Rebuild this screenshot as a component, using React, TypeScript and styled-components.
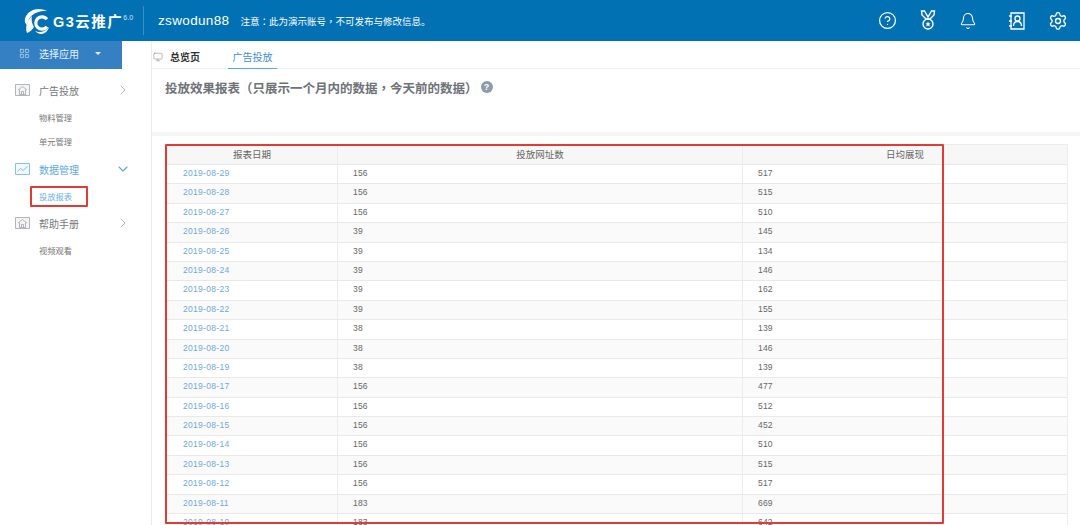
import styled, { createGlobalStyle } from 'styled-components'
import { Bell, ChevronDown, ChevronRight, CircleHelp, LayoutGrid, Monitor, Settings } from 'lucide-react'

const GlobalStyle = createGlobalStyle`
  html, body {
    margin: 0;
    height: 525px;
    overflow: hidden;
    background: #fff;
    font-family: "Liberation Sans", "Noto Sans CJK SC", sans-serif;
  }
  * { box-sizing: border-box; }
`

const Page = styled.div`
  position: relative;
  width: 1080px;
  height: 525px;
  overflow: hidden;
`

const TopBar = styled.header`
  display: flex;
  align-items: center;
  height: 41px;
  padding-left: 24px;
  background: #0271b4;
  color: #fff;
`

const Logo = styled.div`
  display: flex;
  align-items: center;
  width: 119px;
`

const LogoName = styled.span`
  margin-left: 2px;
  font-size: 14.5px;
  font-weight: 700;
  letter-spacing: 1.5px;
  white-space: nowrap;
`

const LogoVersion = styled.sup`
  margin: -7px 0 0 0;
  font-size: 7px;
  opacity: 0.8;
`

const Divider = styled.div`
  width: 1px;
  height: 29px;
  margin-right: 14px;
  background: rgba(255, 255, 255, 0.22);
`

const UserName = styled.span`
  font-size: 13.5px;
  letter-spacing: 0.35px;
`

const Notice = styled.span`
  margin-left: 11px;
  font-family: "Liberation Sans", "Noto Sans CJK TC", sans-serif;
  font-size: 9.5px;
`

const NoticeStop = styled.span`
  font-family: "Noto Sans CJK SC", sans-serif;
`

const TopIcons = styled.div`
  display: flex;
  align-items: center;
  margin-left: auto;
  padding-right: 2px;
`

const TopIcon = styled.span<{ $width: number }>`
  display: flex;
  justify-content: center;
  width: ${p => p.$width}px;
`

const Body = styled.div`
  display: flex;
  height: 484px;
`

const Sidebar = styled.aside`
  flex: none;
  width: 152px;
  border-right: 1px solid #ececec;
`

const AppSelect = styled.div`
  display: flex;
  align-items: center;
  width: 122px;
  height: 28px;
  padding: 0 0 3px 19px;
  background: #3580c2;
  color: #e8f2fa;
  font-size: 10px;
`

const AppLabel = styled.span`
  margin-left: 9px;
`

const Caret = styled.span`
  width: 0;
  height: 0;
  margin-left: 16px;
  border-left: 3.5px solid transparent;
  border-right: 3.5px solid transparent;
  border-top: 3.5px solid #e8f2fa;
`

const NavGroup = styled.div<{ $top: number }>`
  display: flex;
  align-items: center;
  height: 20px;
  margin-top: ${p => p.$top}px;
  padding: 0 20px 0 15px;
`

const NavIconBox = styled.span<{ $active?: boolean }>`
  display: flex;
  width: 15px;
  height: 12px;
  color: ${p => (p.$active ? '#7db8e8' : '#a9adb1')};
`

const NavLabel = styled.span<{ $active?: boolean }>`
  flex: 1;
  margin-left: 9px;
  font-size: 10px;
  color: ${p => (p.$active ? '#5ba7e6' : '#777')};
`

const NavChild = styled.div<{ $active?: boolean; $top: number }>`
  height: 14px;
  margin-top: ${p => p.$top}px;
  padding-left: 39px;
  font-size: 8.25px;
  line-height: 14px;
  color: ${p => (p.$active ? '#6bb0ea' : '#777')};
`

const Main = styled.main`
  flex: 1;
  min-width: 0;
`

const Tabs = styled.nav`
  display: flex;
  height: 28px;
  border-bottom: 1px solid #eee;
`

const Tab = styled.div<{ $active?: boolean }>`
  display: flex;
  align-items: center;
  gap: 7px;
  height: 28px;
  padding-top: 3px;
  font-size: 10px;
  color: ${p => (p.$active ? '#3c8fd4' : '#333')};
  font-weight: ${p => (p.$active ? 400 : 700)};
  border-bottom: ${p => (p.$active ? '1px solid #5ba7e6' : 'none')};
`

const OverviewTab = styled(Tab)`
  margin-left: 1px;
  width: 75px;
`

const AdTab = styled(Tab)`
  justify-content: center;
  width: 49px;
`

const TitleArea = styled.div`
  display: flex;
  align-items: flex-start;
  height: 67px;
  padding: 11px 0 0 13px;
  border-bottom: 4px solid #f6f6f6;
`

const Title = styled.h1`
  margin: 0;
  font-family: "Liberation Sans", "Noto Sans CJK TC", sans-serif;
  font-size: 12.5px;
  line-height: 18px;
  font-weight: 700;
  color: #6e7278;
  white-space: nowrap;
`

const HelpDot = styled.span`
  display: flex;
  align-items: center;
  justify-content: center;
  width: 12px;
  height: 12px;
  margin: 1px 0 0 3px;
  border-radius: 50%;
  background: #8f9ba8;
  color: #fff;
  font-size: 9px;
  font-weight: 700;
`

const TableWrap = styled.div`
  width: 902px;
  margin: 8px 0 0 14px;
  border: 1px solid #ececec;
`

const HeadRow = styled.div`
  display: grid;
  grid-template-columns: 170px 405px 1fr;
  height: 19px;
  background: #f7f7f7;
  font-size: 9.5px;
  line-height: 19px;
  color: #666;
  text-align: center;
`

const Row = styled.div`
  display: grid;
  grid-template-columns: 170px 405px 1fr;
  height: 19.4px;
  border-top: 1px solid #e9e9e9;
  font-size: 8.5px;
  line-height: 17px;
  color: #666;

  &:nth-child(odd) {
    background: #fafafa;
  }
`

const Cell = styled.div`
  padding-left: 15px;
  border-left: 1px solid #ececec;
  letter-spacing: 0.2px;
`

const HeadCell = styled.div`
  border-left: 1px solid #ececec;

  &:first-child {
    border-left: 0;
  }
`

const DateCell = styled.div`
  padding-left: 16px;
  color: #6fa8dc;
  letter-spacing: 0.3px;
`

const Highlight = styled.div`
  position: absolute;
  border: 2px solid #e23b36;
  border-radius: 1px;
  pointer-events: none;
`

const TableHighlight = styled(Highlight)`
  left: 165px;
  top: 144px;
  width: 779px;
  height: 380px;
`

const NavHighlight = styled(Highlight)`
  left: 30px;
  top: 186px;
  width: 58px;
  height: 21px;
`

const rows = [
  ['2019-08-29', 156, 517],
  ['2019-08-28', 156, 515],
  ['2019-08-27', 156, 510],
  ['2019-08-26', 39, 145],
  ['2019-08-25', 39, 134],
  ['2019-08-24', 39, 146],
  ['2019-08-23', 39, 162],
  ['2019-08-22', 39, 155],
  ['2019-08-21', 38, 139],
  ['2019-08-20', 38, 146],
  ['2019-08-19', 38, 139],
  ['2019-08-17', 156, 477],
  ['2019-08-16', 156, 512],
  ['2019-08-15', 156, 452],
  ['2019-08-14', 156, 510],
  ['2019-08-13', 156, 515],
  ['2019-08-12', 156, 517],
  ['2019-08-11', 183, 669],
  ['2019-08-10', 183, 642],
]

const LogoMark = () => (
  <svg width="27" height="26" viewBox="0 0 27 26" fill="none">
    <path d="M1 14C0 9 4 4 9 2c5-2 10-1 14 1-4 0-7 0-11 2-5 2-8 6-9 12-1-1-2-2-2-3z" fill="#fff" />
    <path d="M3 25C1 19 3 12 8 8c-1 4 0 8 2 11-2 3-4 5-7 6z" fill="#fff" />
    <circle cx="18" cy="15" r="6.2" stroke="#fff" strokeWidth="3.2" strokeDasharray="30 9" strokeDashoffset="-4" />
    <path d="M11 23c5 2 10 1 14-4-1 4-4 7-8 7-2 0-4-1-6-3z" fill="#fff" />
  </svg>
)

const MedalIcon = () => (
  <svg width="16" height="21" viewBox="0 0 16 21" fill="none" stroke="#fff" strokeWidth="1.4">
    <path d="M1.5 1h3l3.5 6 3.5-6h3L14 5l-4 4H6L2 5z" />
    <circle cx="8" cy="14" r="5" />
    <path d="M8 11.5l.8 1.7 1.8.2-1.3 1.2.3 1.8-1.6-.9-1.6.9.3-1.8-1.3-1.2 1.8-.2z" fill="#fff" stroke="none" />
  </svg>
)

const ContactsIcon = () => (
  <svg width="17" height="18" viewBox="0 0 17 18" fill="none" stroke="#fff" strokeWidth="1.3">
    <path d="M3 1h13v16H3z" />
    <path d="M1 4h3M1 9h3M1 14h3" />
    <circle cx="9.5" cy="6.5" r="2.5" />
    <path d="M5.5 14c0-3 2-4.5 4-4.5s4 1.5 4 4.5" />
  </svg>
)

const HouseIcon = () => (
  <svg width="15" height="12" viewBox="0 0 15 12" fill="#f5f5f5" stroke="currentColor" strokeWidth="0.9">
    <path d="M0.5 0.5h14v11h-14z" />
    <path d="M3 6l4.5-3.5L12 6M4.5 5.5v5h6v-5M6.5 10.5v-3h2v3" />
  </svg>
)

const ChartIcon = () => (
  <svg width="15" height="12" viewBox="0 0 15 12" fill="#f0f7fd" stroke="currentColor" strokeWidth="0.9">
    <path d="M0.5 0.5h14v11h-14z" />
    <path d="M2.5 8.5l3-3 2.5 2 4.5-4" fill="none" />
  </svg>
)

export default function App() {
  return (
    <Page>
      <GlobalStyle />
      <TopBar>
        <Logo>
          <LogoMark />
          <LogoName>G3云推广</LogoName>
          <LogoVersion>6.0</LogoVersion>
        </Logo>
        <Divider />
        <UserName>zswodun88</UserName>
        <Notice>注意：此为演示账号，不可发布与修改信息<NoticeStop>。</NoticeStop></Notice>
        <TopIcons>
          <TopIcon $width={54}><CircleHelp size={19} strokeWidth={1.6} /></TopIcon>
          <TopIcon $width={28}><MedalIcon /></TopIcon>
          <TopIcon $width={52}><Bell size={18} strokeWidth={1.4} /></TopIcon>
          <TopIcon $width={44}><ContactsIcon /></TopIcon>
          <TopIcon $width={40}><Settings size={20} strokeWidth={1.6} /></TopIcon>
        </TopIcons>
      </TopBar>
      <Body>
        <Sidebar>
          <AppSelect>
            <LayoutGrid size={11} strokeWidth={1.2} />
            <AppLabel>选择应用</AppLabel>
            <Caret />
          </AppSelect>
          <NavGroup $top={11}>
            <NavIconBox><HouseIcon /></NavIconBox>
            <NavLabel>广告投放</NavLabel>
            <ChevronRight size={16} color="#a6a6a6" strokeWidth={1.2} />
          </NavGroup>
          <NavChild $top={12}>物料管理</NavChild>
          <NavChild $top={10}>单元管理</NavChild>
          <NavGroup $top={9}>
            <NavIconBox $active><ChartIcon /></NavIconBox>
            <NavLabel $active>数据管理</NavLabel>
            <ChevronDown size={16} color="#5ba7e6" strokeWidth={1.6} />
          </NavGroup>
          <NavChild $active $top={12}>投放报表</NavChild>
          <NavGroup $top={8}>
            <NavIconBox><HouseIcon /></NavIconBox>
            <NavLabel>帮助手册</NavLabel>
            <ChevronRight size={16} color="#a6a6a6" strokeWidth={1.2} />
          </NavGroup>
          <NavChild $top={12}>视频观看</NavChild>
        </Sidebar>
        <Main>
          <Tabs>
            <OverviewTab><Monitor size={10} color="#666" strokeWidth={1} />总览页</OverviewTab>
            <AdTab $active>广告投放</AdTab>
          </Tabs>
          <TitleArea>
            <Title>投放效果报表（只展示一个月内的数据，今天前的数据）</Title>
            <HelpDot>?</HelpDot>
          </TitleArea>
          <TableWrap>
            <HeadRow>
              <HeadCell>报表日期</HeadCell>
              <HeadCell>投放网址数</HeadCell>
              <HeadCell>日均展现</HeadCell>
            </HeadRow>
            {rows.map(([date, urls, views]) => (
              <Row key={date}>
                <DateCell>{date}</DateCell>
                <Cell>{urls}</Cell>
                <Cell>{views}</Cell>
              </Row>
            ))}
          </TableWrap>
        </Main>
      </Body>
      <TableHighlight />
      <NavHighlight />
    </Page>
  )
}
